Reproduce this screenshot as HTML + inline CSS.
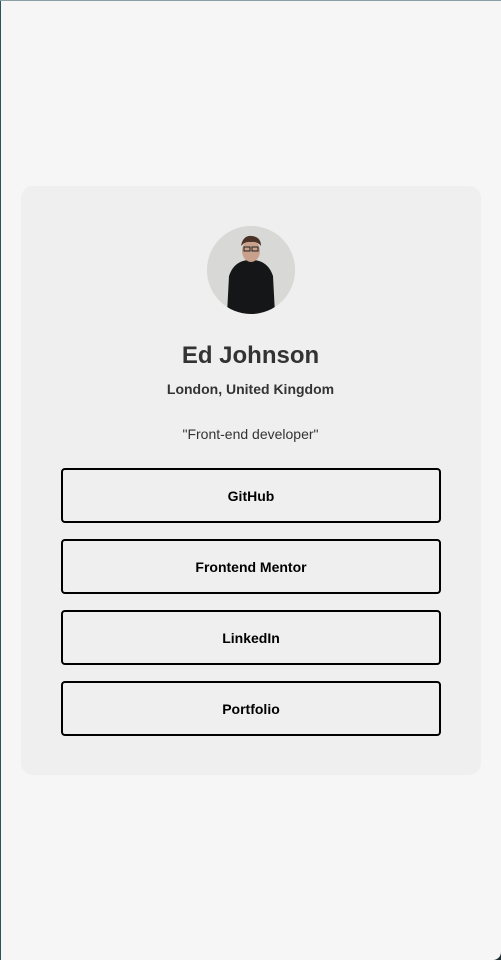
<!DOCTYPE html>
<html><head><style>
html,body{margin:0;padding:0}
body{width:501px;height:960px;background:#f6f6f6;position:relative;overflow:hidden;font-family:"Liberation Sans",sans-serif;color:#333}
.edge{position:absolute;left:0;top:0;width:1px;height:960px;background:#2a5560}
.top{position:absolute;left:0;top:0;width:501px;height:1px;background:#8aa0a6}
.card{position:absolute;left:21px;top:186px;width:460px;height:589px;background:#efefef;border-radius:12px}
.av{position:absolute;left:207px;top:226px;width:88px;height:88px;border-radius:50%;overflow:hidden;background:#dcdcda}
.t{position:absolute;left:0;width:501px;text-align:center}
.btn{position:absolute;left:61px;width:376px;height:51px;border:2px solid #000;border-radius:4px;text-align:center;line-height:52px;font-weight:bold;font-size:14px;color:#000}
.corner{position:absolute;right:0;bottom:0;width:8px;height:8px;background:#1e2f33}
.corner div{width:8px;height:8px;background:#f6f6f6;border-bottom-right-radius:8px}
</style></head><body>
<div class="edge"></div><div class="top"></div>
<div class="card"></div>
<div class="av"><svg width="88" height="88" viewBox="0 0 88 88">
<rect width="88" height="88" fill="#d8d8d6"/>
<path d="M20 88 L22 50 Q26 38 36 35 L44 33 L52 35 Q62 38 66 50 L68 88 Z" fill="#151618"/>
<ellipse cx="44" cy="25" rx="9" ry="11" fill="#c9a08c"/>
<path d="M34 20 Q36 9 45 10 Q54 11 54 20 Q50 15 44 16 Q38 15 34 20Z" fill="#4a3326"/>
<rect x="37" y="21" width="6" height="4" fill="none" stroke="#222" stroke-width="1"/>
<rect x="45" y="21" width="6" height="4" fill="none" stroke="#222" stroke-width="1"/>
</svg></div>
<div class="t" style="top:342px;font-size:24px;font-weight:bold">Ed Johnson</div>
<div class="t" style="top:381px;font-size:14px;font-weight:bold">London, United Kingdom</div>
<div class="t" style="top:426px;font-size:14px">"Front-end developer"</div>
<div class="btn" style="top:468px">GitHub</div>
<div class="btn" style="top:539px">Frontend Mentor</div>
<div class="btn" style="top:610px">LinkedIn</div>
<div class="btn" style="top:681px">Portfolio</div>
<div class="corner"><div></div></div>
</body></html>
